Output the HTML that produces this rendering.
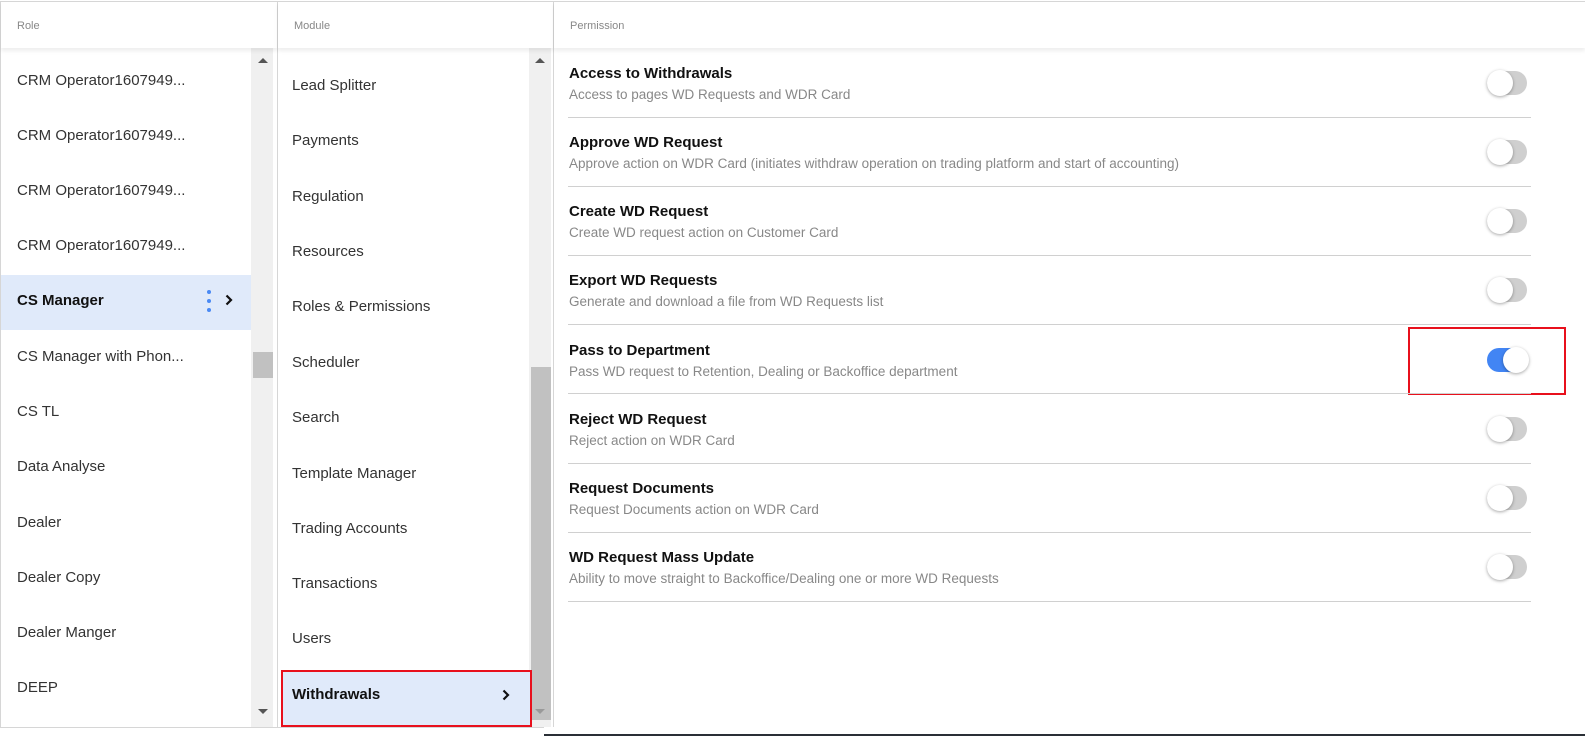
<!DOCTYPE html>
<html><head><meta charset="utf-8"><style>
*{box-sizing:border-box;margin:0;padding:0}
body{width:1585px;height:736px;position:relative;background:#fff;font-family:"Liberation Sans",sans-serif;overflow:hidden;color:#222}
.a{position:absolute}
.hd{position:absolute;top:2px;height:46px;font-size:11px;color:#888;line-height:48px;padding-left:16px;background:#fff;box-shadow:0 3px 4px rgba(0,0,0,.07);z-index:2}
.it{position:absolute;font-size:15px;color:#333;white-space:nowrap}
.vl{position:absolute;width:1px;background:#d6d6d6}
.sb{position:absolute;width:22px;background:#f0f0f0}
.th{position:absolute;background:#c1c1c1}
.up{position:absolute;width:0;height:0;border-left:5px solid transparent;border-right:5px solid transparent;border-bottom:5px solid #555}
.dn{position:absolute;width:0;height:0;border-left:5px solid transparent;border-right:5px solid transparent;border-top:5px solid #555}
.pt{position:absolute;left:569px;font-size:15px;font-weight:bold;color:#111}
.pd{position:absolute;left:569px;font-size:13.5px;color:#888}
.dv{position:absolute;left:568px;width:963px;height:1px;background:#d0d0d0}
.tg{position:absolute;left:1487px;width:40px;height:24px;border-radius:12px;background:#cfcfcf}
.tg::after{content:"";position:absolute;left:0;top:-1px;width:26px;height:26px;border-radius:50%;background:#fff;box-shadow:0 1px 3px rgba(0,0,0,.35)}
.tg.on{background:#4285f4}
.tg.on::after{left:16px}
</style></head><body>
<div class="a" style="left:0;top:1px;width:1585px;height:1px;background:#d6d6d6"></div>
<div class="vl" style="left:0;top:1px;height:726px"></div>
<div class="vl" style="left:277px;top:1px;height:726px"></div>
<div class="vl" style="left:553px;top:1px;height:726px"></div>
<div class="hd" style="left:1px;width:276px">Role</div>
<div class="hd" style="left:278px;width:275px">Module</div>
<div class="hd" style="left:554px;width:1031px">Permission</div>

<div class="sb" style="left:251px;top:48px;height:679px"></div>
<div class="th" style="left:253px;top:352px;width:20px;height:26px"></div>
<div class="up" style="left:258px;top:58px"></div>
<div class="dn" style="left:258px;top:709px"></div>

<div class="a" style="left:1px;top:275px;width:250px;height:55px;background:#e0eafa"></div>
<div class="it" style="left:17px;top:72px">CRM Operator1607949...</div>
<div class="it" style="left:17px;top:127px">CRM Operator1607949...</div>
<div class="it" style="left:17px;top:182px">CRM Operator1607949...</div>
<div class="it" style="left:17px;top:237px">CRM Operator1607949...</div>
<div class="it" style="left:17px;top:292px;font-weight:bold;color:#111">CS Manager</div>
<div class="a" style="left:207px;top:290px;width:4px;height:4px;border-radius:50%;background:#4a8af4"></div>
<div class="a" style="left:207px;top:299px;width:4px;height:4px;border-radius:50%;background:#4a8af4"></div>
<div class="a" style="left:207px;top:308px;width:4px;height:4px;border-radius:50%;background:#4a8af4"></div>
<svg class="a" style="left:224px;top:294px" width="10" height="12" viewBox="0 0 10 12"><path d="M2.5 1.5 L7 6 L2.5 10.5" fill="none" stroke="#111" stroke-width="2.2"/></svg>
<div class="it" style="left:17px;top:348px">CS Manager with Phon...</div>
<div class="it" style="left:17px;top:403px">CS TL</div>
<div class="it" style="left:17px;top:458px">Data Analyse</div>
<div class="it" style="left:17px;top:514px">Dealer</div>
<div class="it" style="left:17px;top:569px">Dealer Copy</div>
<div class="it" style="left:17px;top:624px">Dealer Manger</div>
<div class="it" style="left:17px;top:679px">DEEP</div>

<div class="sb" style="left:529px;top:48px;height:679px"></div>
<div class="th" style="left:531px;top:367px;width:20px;height:353px"></div>
<div class="up" style="left:535px;top:58px"></div>
<div class="dn" style="left:535px;top:709px;border-top-color:#999"></div>
<div class="it" style="left:292px;top:77px">Lead Splitter</div>
<div class="it" style="left:292px;top:132px">Payments</div>
<div class="it" style="left:292px;top:188px">Regulation</div>
<div class="it" style="left:292px;top:243px">Resources</div>
<div class="it" style="left:292px;top:298px">Roles &amp; Permissions</div>
<div class="it" style="left:292px;top:354px">Scheduler</div>
<div class="it" style="left:292px;top:409px">Search</div>
<div class="it" style="left:292px;top:465px">Template Manager</div>
<div class="it" style="left:292px;top:520px">Trading Accounts</div>
<div class="it" style="left:292px;top:575px">Transactions</div>
<div class="it" style="left:292px;top:630px">Users</div>
<div class="a" style="left:281px;top:670px;width:251px;height:57px;background:#e0eafa;border:2px solid #e8101c"></div>
<div class="it" style="left:292px;top:686px;font-weight:bold;color:#111">Withdrawals</div>
<svg class="a" style="left:501px;top:689px" width="10" height="12" viewBox="0 0 10 12"><path d="M2.5 1.5 L7 6 L2.5 10.5" fill="none" stroke="#111" stroke-width="2.2"/></svg>

<div class="pt" style="top:65px">Access to Withdrawals</div>
<div class="pd" style="top:87px">Access to pages WD Requests and WDR Card</div>
<div class="tg" style="top:71px"></div>
<div class="dv" style="top:117px"></div>
<div class="pt" style="top:134px">Approve WD Request</div>
<div class="pd" style="top:156px">Approve action on WDR Card (initiates withdraw operation on trading platform and start of accounting)</div>
<div class="tg" style="top:140px"></div>
<div class="dv" style="top:186px"></div>
<div class="pt" style="top:203px">Create WD Request</div>
<div class="pd" style="top:225px">Create WD request action on Customer Card</div>
<div class="tg" style="top:209px"></div>
<div class="dv" style="top:255px"></div>
<div class="pt" style="top:272px">Export WD Requests</div>
<div class="pd" style="top:294px">Generate and download a file from WD Requests list</div>
<div class="tg" style="top:278px"></div>
<div class="dv" style="top:324px"></div>
<div class="pt" style="top:342px">Pass to Department</div>
<div class="pd" style="top:364px">Pass WD request to Retention, Dealing or Backoffice department</div>
<div class="tg on" style="top:348px"></div>
<div class="a" style="left:1408px;top:327px;width:158px;height:68px;border:2px solid #e8101c"></div>
<div class="dv" style="top:393px"></div>
<div class="pt" style="top:411px">Reject WD Request</div>
<div class="pd" style="top:433px">Reject action on WDR Card</div>
<div class="tg" style="top:417px"></div>
<div class="dv" style="top:463px"></div>
<div class="pt" style="top:480px">Request Documents</div>
<div class="pd" style="top:502px">Request Documents action on WDR Card</div>
<div class="tg" style="top:486px"></div>
<div class="dv" style="top:532px"></div>
<div class="pt" style="top:549px">WD Request Mass Update</div>
<div class="pd" style="top:571px">Ability to move straight to Backoffice/Dealing one or more WD Requests</div>
<div class="tg" style="top:555px"></div>
<div class="dv" style="top:601px"></div>

<div class="a" style="left:0;top:727px;width:544px;height:1px;background:#d6d6d6"></div>
<div class="a" style="left:544px;top:734px;width:1041px;height:2px;background:#2a2f36"></div>
</body></html>
